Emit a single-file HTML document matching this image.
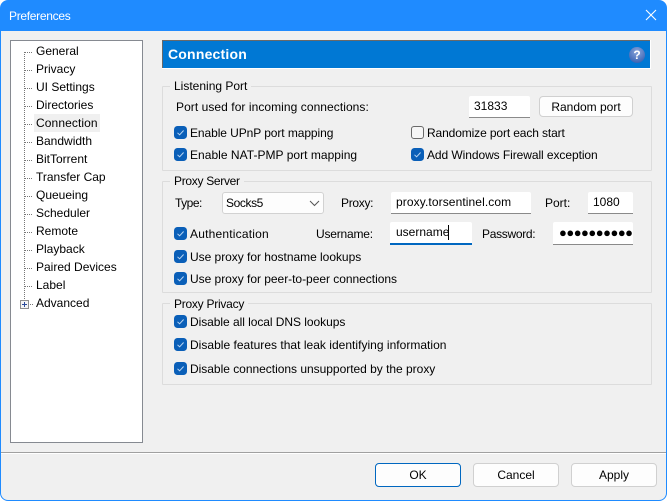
<!DOCTYPE html>
<html><head><meta charset="utf-8"><style>
html,body{margin:0;padding:0;background:#fff}
#w{position:relative;width:667px;height:501px;overflow:hidden;background:#f0f0f0;font-family:"Liberation Sans",sans-serif;font-size:12px;color:#000}
#w div,#w span.a{position:absolute;box-sizing:border-box}
.t{white-space:nowrap;line-height:18px;height:18px}
.g{border:1px solid #dcdcdc;border-radius:1px}
.gl{background:#f0f0f0;padding:0 4px 0 4px;white-space:nowrap;line-height:16px;height:16px}
.c{width:13px;height:13px;border-radius:3.5px;background:#0a5fb8}
.c svg{position:absolute;left:0;top:0}
.u{width:13px;height:13px;border-radius:3px;background:#f6f6f6;border:1px solid #6a6a6a}
.e{background:#fff;border-bottom:1px solid #8a8a8a;border-radius:2px 2px 0 0;line-height:20px;padding-left:5px;white-space:nowrap;overflow:hidden}
.b{background:#fdfdfd;border:1px solid #d0d0d0;border-radius:4px;text-align:center;line-height:22px}
.dh{height:1px;width:8px;left:25px;background-image:linear-gradient(90deg,#777 50%,transparent 50%);background-size:2px 1px}
</style></head><body><div id="w">
<div style="left:0;top:0;width:667px;height:501px;background:#fff"></div>
<div style="left:0;top:0;width:667px;height:501px;background:#1f8bff;border-radius:8px 8px 8px 8px"></div>
<div style="left:1px;top:31px;width:665px;height:469px;background:#f0f0f0;border-radius:0 0 7px 7px"></div>
<div class="t" style="left:9px;top:7px;color:#fff;letter-spacing:-.3px">Preferences</div>
<svg class="a" style="position:absolute;left:645px;top:9px" width="12" height="12"><path d="M1 1L11 11M11 1L1 11" stroke="#fff" stroke-width="1.1" fill="none"/></svg>

<div style="left:10px;top:40px;width:133px;height:403px;background:#fff;border:1px solid #868a91"></div>
<div style="left:24px;top:52px;width:1px;height:247px;background-image:linear-gradient(180deg,#777 50%,transparent 50%);background-size:1px 2px"></div>
<div class="dh" style="top:52px"></div><div class="dh" style="top:70px"></div><div class="dh" style="top:88px"></div><div class="dh" style="top:106px"></div><div class="dh" style="top:124px"></div><div class="dh" style="top:142px"></div><div class="dh" style="top:160px"></div><div class="dh" style="top:178px"></div><div class="dh" style="top:196px"></div><div class="dh" style="top:214px"></div><div class="dh" style="top:232px"></div><div class="dh" style="top:250px"></div><div class="dh" style="top:268px"></div><div class="dh" style="top:286px"></div>
<div class="dh" style="top:304px;left:30px;width:3px"></div>
<div style="left:20px;top:300px;width:9px;height:9px;background:#f4f4f4;border:1px solid #8e8e8e"></div>
<div style="left:22px;top:304px;width:5px;height:1px;background:#2a4a9a"></div>
<div style="left:24px;top:302px;width:1px;height:5px;background:#2a4a9a"></div>
<div style="left:34px;top:114px;width:66px;height:18px;background:#f0f0f0"></div>
<div class="t" style="left:36px;top:42px">General</div>
<div class="t" style="left:36px;top:60px">Privacy</div>
<div class="t" style="left:36px;top:78px">UI Settings</div>
<div class="t" style="left:36px;top:96px">Directories</div>
<div class="t" style="left:36px;top:114px;letter-spacing:.1px">Connection</div>
<div class="t" style="left:36px;top:132px">Bandwidth</div>
<div class="t" style="left:36px;top:150px">BitTorrent</div>
<div class="t" style="left:36px;top:168px">Transfer Cap</div>
<div class="t" style="left:36px;top:186px">Queueing</div>
<div class="t" style="left:36px;top:204px">Scheduler</div>
<div class="t" style="left:36px;top:222px">Remote</div>
<div class="t" style="left:36px;top:240px">Playback</div>
<div class="t" style="left:36px;top:258px">Paired Devices</div>
<div class="t" style="left:36px;top:276px">Label</div>
<div class="t" style="left:36px;top:294px">Advanced</div>

<div style="left:162px;top:40px;width:489px;height:29px;background:#fff"></div>
<div style="left:162px;top:40px;width:488px;height:28px;background:#0078d4;border-top:1px solid #696969;border-left:1px solid #696969"></div>
<div class="t" style="left:168px;top:45px;color:#fff;font-weight:bold;font-size:14px;letter-spacing:.2px">Connection</div>
<div style="left:629px;top:47px;width:16px;height:16px;border-radius:50%;background:radial-gradient(circle at 50% 30%,#8aa6dc,#3c64b4 80%);color:#fff;font-weight:bold;font-size:12px;text-align:center;line-height:16px">?</div>

<div class="g" style="left:162px;top:86px;width:490px;height:85px"></div>
<div class="gl" style="left:170px;top:78px">Listening Port</div>
<div class="t" style="left:176px;top:98px;letter-spacing:.06px">Port used for incoming connections:</div>
<div class="e" style="left:469px;top:96px;width:61px;height:22px">31833</div>
<div class="b" style="left:539px;top:96px;width:94px;height:21px;line-height:20px">Random port</div>
<div class="c" style="left:174px;top:126px"><svg width="13" height="13"><path d="M3.5 6.8L5.6 8.8L9.6 4.5" stroke="#b9d5f2" stroke-width="1" fill="none"/></svg></div>
<div class="t" style="left:190px;top:124px;letter-spacing:-.08px">Enable UPnP port mapping</div>
<div class="u" style="left:411px;top:126px"></div>
<div class="t" style="left:427px;top:124px;letter-spacing:-.12px">Randomize port each start</div>
<div class="c" style="left:174px;top:148px"><svg width="13" height="13"><path d="M3.5 6.8L5.6 8.8L9.6 4.5" stroke="#b9d5f2" stroke-width="1" fill="none"/></svg></div>
<div class="t" style="left:190px;top:146px;letter-spacing:.03px">Enable NAT-PMP port mapping</div>
<div class="c" style="left:411px;top:148px"><svg width="13" height="13"><path d="M3.5 6.8L5.6 8.8L9.6 4.5" stroke="#b9d5f2" stroke-width="1" fill="none"/></svg></div>
<div class="t" style="left:427px;top:146px;letter-spacing:-.07px">Add Windows Firewall exception</div>

<div class="g" style="left:162px;top:181px;width:490px;height:112px"></div>
<div class="gl" style="left:170px;top:173px;letter-spacing:-.3px">Proxy Server</div>
<div class="t" style="left:175px;top:194px;letter-spacing:-.5px">Type:</div>
<div style="left:222px;top:192px;width:102px;height:22px;background:#fdfdfd;border:1px solid #d2d2d2;border-radius:3px;line-height:20px;padding-left:3px;letter-spacing:-.4px">Socks5</div>
<svg style="position:absolute;left:309px;top:200px" width="11" height="7"><path d="M1 1L5.5 5.5L10 1" stroke="#555" fill="none"/></svg>
<div class="t" style="left:341px;top:194px;letter-spacing:-.3px">Proxy:</div>
<div class="e" style="left:391px;top:192px;width:140px;height:22px;letter-spacing:.1px">proxy.torsentinel.com</div>
<div class="t" style="left:545px;top:194px">Port:</div>
<div class="e" style="left:588px;top:192px;width:45px;height:22px">1080</div>
<div class="c" style="left:174px;top:227px"><svg width="13" height="13"><path d="M3.5 6.8L5.6 8.8L9.6 4.5" stroke="#b9d5f2" stroke-width="1" fill="none"/></svg></div>
<div class="t" style="left:190px;top:225px;letter-spacing:.2px">Authentication</div>
<div class="t" style="left:316px;top:225px;letter-spacing:-.2px">Username:</div>
<div class="e" style="left:390px;top:222px;width:82px;height:23px;border-bottom:2px solid #0067c0;padding-left:6px">username</div>
<div style="left:448px;top:225px;width:1px;height:15px;background:#000"></div>
<div class="t" style="left:482px;top:225px;letter-spacing:-.3px">Password:</div>
<div class="e" style="left:553px;top:222px;width:80px;height:23px;padding-left:6px;font-size:13px;letter-spacing:-.5px;font-weight:bold;line-height:22px">●●●●●●●●●●●</div>
<div class="c" style="left:174px;top:250px"><svg width="13" height="13"><path d="M3.5 6.8L5.6 8.8L9.6 4.5" stroke="#b9d5f2" stroke-width="1" fill="none"/></svg></div>
<div class="t" style="left:190px;top:248px;letter-spacing:-.03px">Use proxy for hostname lookups</div>
<div class="c" style="left:174px;top:272px"><svg width="13" height="13"><path d="M3.5 6.8L5.6 8.8L9.6 4.5" stroke="#b9d5f2" stroke-width="1" fill="none"/></svg></div>
<div class="t" style="left:190px;top:270px;letter-spacing:-.03px">Use proxy for peer-to-peer connections</div>

<div class="g" style="left:162px;top:303px;width:490px;height:82px"></div>
<div class="gl" style="left:170px;top:296px;letter-spacing:-.25px">Proxy Privacy</div>
<div class="c" style="left:174px;top:315px"><svg width="13" height="13"><path d="M3.5 6.8L5.6 8.8L9.6 4.5" stroke="#b9d5f2" stroke-width="1" fill="none"/></svg></div>
<div class="t" style="left:190px;top:313px;letter-spacing:-.05px">Disable all local DNS lookups</div>
<div class="c" style="left:174px;top:338px"><svg width="13" height="13"><path d="M3.5 6.8L5.6 8.8L9.6 4.5" stroke="#b9d5f2" stroke-width="1" fill="none"/></svg></div>
<div class="t" style="left:190px;top:336px;letter-spacing:.02px">Disable features that leak identifying information</div>
<div class="c" style="left:174px;top:362px"><svg width="13" height="13"><path d="M3.5 6.8L5.6 8.8L9.6 4.5" stroke="#b9d5f2" stroke-width="1" fill="none"/></svg></div>
<div class="t" style="left:190px;top:360px;letter-spacing:-.02px">Disable connections unsupported by the proxy</div>

<div style="left:1px;top:452px;width:665px;height:1px;background:#a0a0a0"></div>
<div style="left:1px;top:453px;width:665px;height:1px;background:#fff"></div>
<div class="b" style="left:375px;top:463px;width:86px;height:24px;border-color:#0067c0">OK</div>
<div class="b" style="left:473px;top:463px;width:86px;height:24px">Cancel</div>
<div class="b" style="left:571px;top:463px;width:86px;height:24px">Apply</div>
</div></body></html>
